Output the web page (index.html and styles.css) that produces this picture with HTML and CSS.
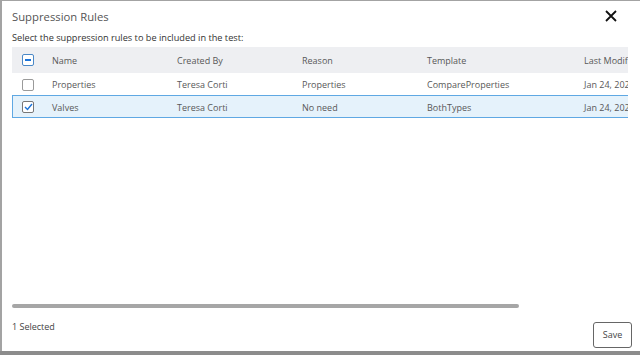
FILE: index.html
```html
<!doctype html>
<html>
<head>
    <meta charset="UTF-8">
    <title>Suppression Rules</title>
    <link rel="stylesheet" href="styles.css">
</head>
<body>
    <div class="modal">
        <div class="modal-header">
            <h1>Suppression Rules</h1>
            <button class="close" title="Close">
                <svg width="12" height="12" viewBox="0 0 12 12">
                    <path d="M1 1 L11 11 M11 1 L1 11" stroke="#111" stroke-width="1.8" fill="none"/>
                </svg>
            </button>
        </div>

        <p class="hint">Select the suppression rules to be included in the test:</p>

        <div class="grid">
            <div class="grid-inner">
                <div class="row head">
                    <span class="cell check"><span class="box partial"></span></span>
                    <span class="cell">Name</span>
                    <span class="cell">Created By</span>
                    <span class="cell">Reason</span>
                    <span class="cell">Template</span>
                    <span class="cell">Last Modified</span>
                </div>
                <div class="row">
                    <span class="cell check"><span class="box"></span></span>
                    <span class="cell">Properties</span>
                    <span class="cell">Teresa Corti</span>
                    <span class="cell">Properties</span>
                    <span class="cell">CompareProperties</span>
                    <span class="cell">Jan 24, 2023</span>
                </div>
                <div class="row selected">
                    <span class="cell check">
                        <span class="box checked">
                            <svg width="9" height="8" viewBox="0 0 9 8">
                                <path d="M1 4 L3.5 6.5 L8 1" stroke="#1a73d9" stroke-width="1.4" fill="none"/>
                            </svg>
                        </span>
                    </span>
                    <span class="cell">Valves</span>
                    <span class="cell">Teresa Corti</span>
                    <span class="cell">No need</span>
                    <span class="cell">BothTypes</span>
                    <span class="cell">Jan 24, 2023</span>
                </div>
            </div>
            <div class="scrollbar"><div class="thumb"></div></div>
        </div>

        <div class="modal-footer">
            <span class="count">1 Selected</span>
            <button class="save">Save</button>
        </div>
    </div>
    <div class="backdrop-strip"></div>
</body>
</html>
```

FILE: styles.css
```css
body {
    margin: 0;
    background-color: #a3a3a3;
    font-family: "Open Sans", sans-serif;
    color: #555;
    overflow: hidden;
}

.modal {
    margin: 1px 0 0 2px;
    width: 638px;
    height: 350px;
    box-sizing: border-box;
    padding: 0 8px 0 10px;
    background-color: white;
    display: flex;
    flex-direction: column;
}

.modal-header {
    display: flex;
    justify-content: space-between;
    align-items: center;
    height: 30px;
}

h1 {
    font-size: 11.3px;
    font-weight: normal;
    color: #555;
    margin: 0;
}

.close {
    background: none;
    border: 0;
    padding: 0;
    margin-right: 15px;
    display: flex;
}

.hint {
    margin: 0;
    font-size: 9.2px;
    color: #333;
    height: 16px;
    line-height: 14px;
}

.grid {
    flex: 1;
    width: 616px;
    display: flex;
    flex-direction: column;
    overflow: hidden;
}

.grid-inner {
    flex: 1;
    width: 680px;
}

.row {
    display: grid;
    grid-template-columns: 40px 125px 125px 125px 157px 108px;
    align-items: center;
    height: 22px;
    padding-top: 1px;
    box-sizing: border-box;
    font-size: 9px;
    color: #585858;
}

.row.head {
    height: 26px;
    padding-top: 0;
    background-color: #eeeff2;
}

.row.selected {
    height: 23px;
    background-color: #e5f2fb;
    box-shadow: inset 1px 1px 0 #5fa8e3, inset 0 -1px 0 #5fa8e3;
}

.cell {
    white-space: nowrap;
}

.check {
    display: flex;
    padding-left: 10px;
}

.box {
    width: 10px;
    height: 10px;
    border: 1px solid #9a9a9a;
    border-radius: 2px;
    background-color: white;
    display: flex;
    align-items: center;
    justify-content: center;
}

.box.partial {
    border-color: #4a88c7;
}

.box.partial::after {
    content: "";
    width: 6px;
    height: 2px;
    background-color: #1a73d9;
}

.box.checked {
    border-color: #777;
}

.scrollbar {
    height: 4px;
    margin: 4px 0 12px 0;
}

.thumb {
    width: 507px;
    height: 4px;
    border-radius: 2px;
    background-color: #a6a6a6;
}

.modal-footer {
    display: flex;
    justify-content: space-between;
    align-items: center;
    height: 29px;
    margin-bottom: 2px;
}

.count {
    font-size: 9px;
    color: #444;
    margin-top: -17px;
}

.save {
    font-family: "Open Sans", sans-serif;
    font-size: 9px;
    color: #444;
    background-color: white;
    border: 1px solid #666;
    border-radius: 3px;
    width: 39px;
    height: 26px;
    padding: 0;
}

.backdrop-strip {
    height: 4px;
    background-color: #8c8c8c;
}
```
